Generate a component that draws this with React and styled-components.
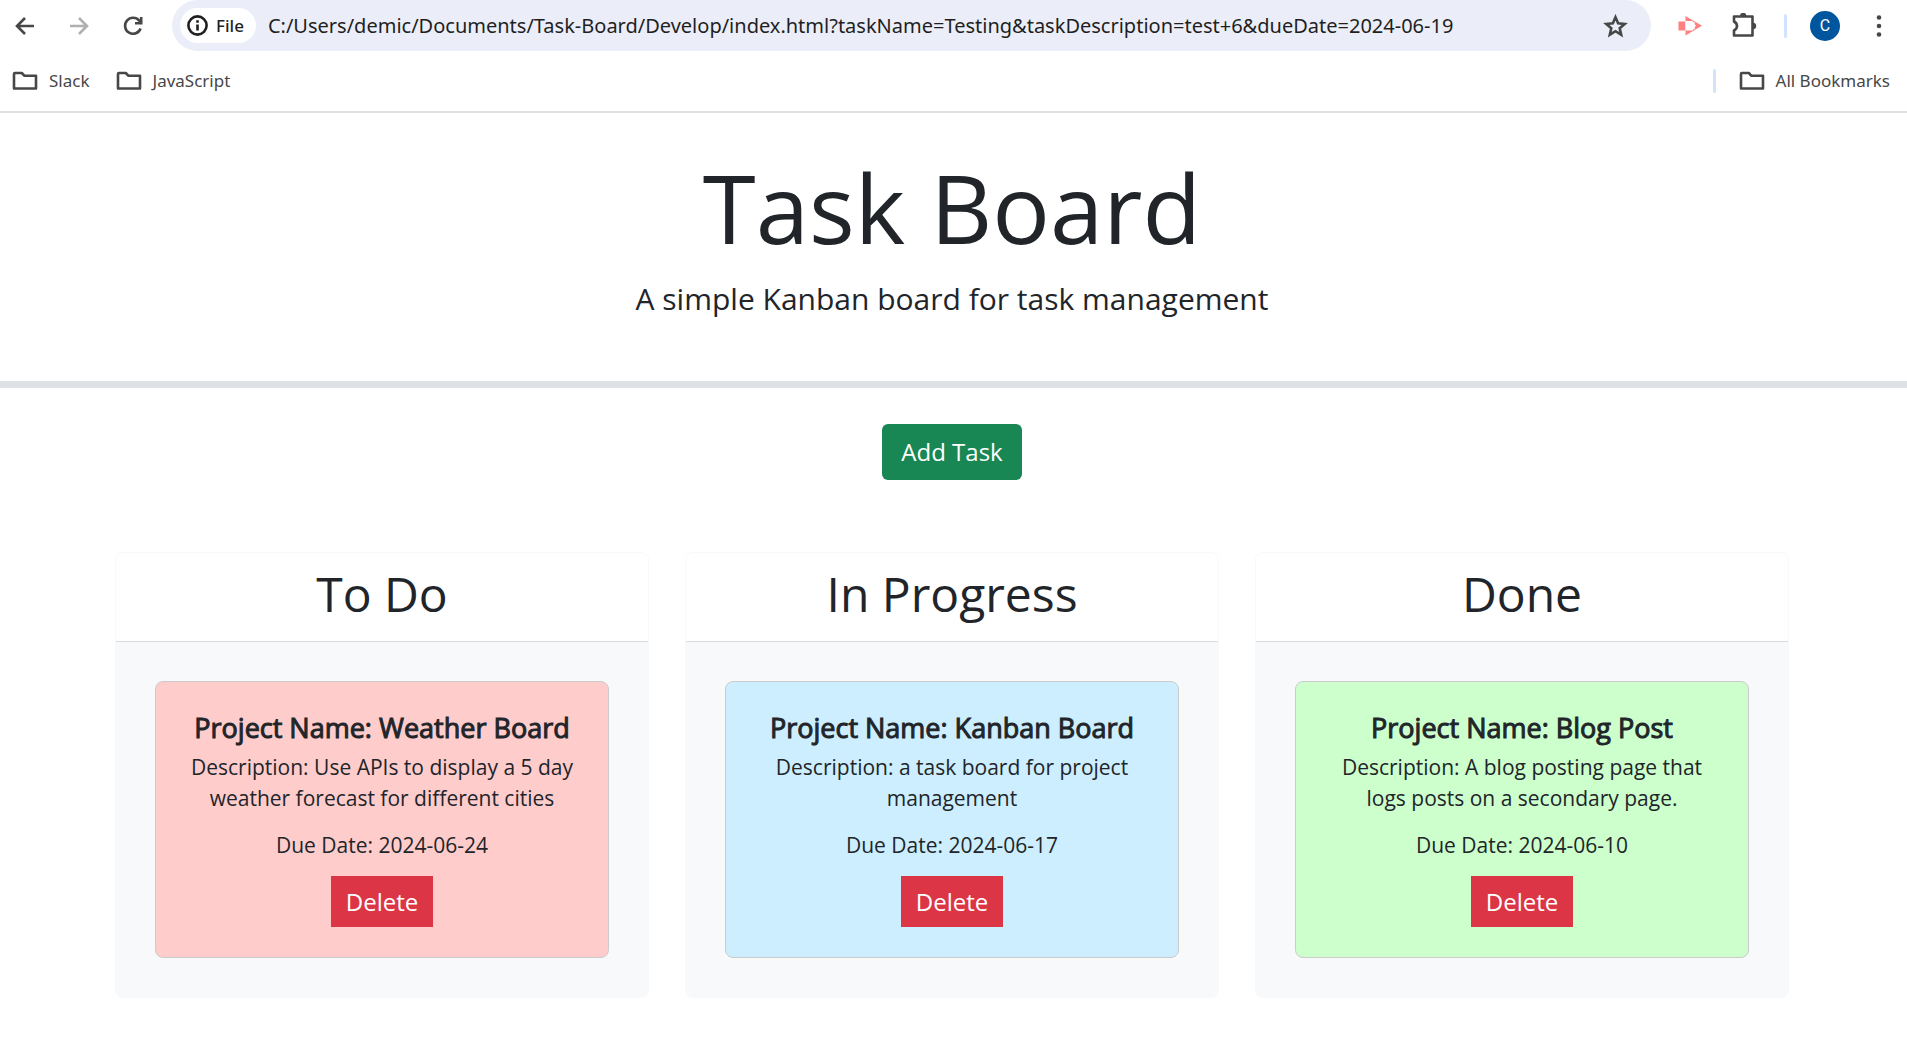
import React from "react";
import styled, { createGlobalStyle } from "styled-components";

const Global = createGlobalStyle`
  *, *::before, *::after { box-sizing: border-box; }
  body {
    margin: 0;
    background: #fff;
    color: #212529;
    font-family: "Open Sans", "Noto Sans", sans-serif;
    font-size: 20px;
    line-height: 30px;
  }
  h1, h2, h3, p { margin: 0; font-weight: 400; }
  button, input { font: inherit; }
`;

const Chrome = styled.div`
  border-bottom: 2px solid #dfdfe0;
  color: #474747;
`;

const Toolbar = styled.div`
  display: flex;
  align-items: center;
  height: 51px;
  padding: 0 14px;
`;

const IconButton = styled.button`
  display: grid;
  place-items: center;
  flex: none;
  width: 54px;
  height: 40px;
  padding: 0;
  border: 0;
  background: none;
  color: ${(p) => (p.$faded ? "#b0b0b0" : "#474747")};
  svg { display: block; }
`;

const NavGroup = styled.div`
  display: flex;
  margin: 0 12px 0 -16px;
`;

const AddressBar = styled.form`
  display: flex;
  align-items: center;
  flex: 1;
  height: 51px;
  padding: 0 9px 0 8px;
  border-radius: 26px;
  background: #ebeef8;
`;

const SchemeChip = styled.button`
  display: flex;
  align-items: center;
  gap: 8px;
  height: 35px;
  padding: 0 12px 0 7px;
  border: 0;
  border-radius: 18px;
  background: #fff;
  color: #1f1f1f;
  font-family: "Noto Sans", "Open Sans", sans-serif;
  font-size: 17px;
  font-weight: 500;
`;

const AddressInput = styled.input`
  flex: 1;
  min-width: 0;
  margin-left: 12px;
  padding: 0;
  border: 0;
  outline: 0;
  background: none;
  color: #1f1f1f;
  font-family: "Noto Sans", "Open Sans", sans-serif;
  font-size: 20px;
`;

const Divider = styled.span`
  width: 3px;
  height: 24px;
  border-radius: 2px;
  background: #d3e3fd;
`;

const Actions = styled.div`
  display: flex;
  align-items: center;
  margin: 0 -13px 0 12px;
`;

const ProfileGroup = styled.div`
  display: flex;
  align-items: center;
  gap: 23px;
  padding: 0 12px 0 13px;
`;

const Avatar = styled.button`
  width: 30px;
  height: 30px;
  padding: 0;
  border: 0;
  border-radius: 50%;
  background: #00569e;
  color: #fff;
  font-family: Roboto, sans-serif;
  font-size: 16px;
  line-height: 30px;
`;

const Bookmarks = styled.nav`
  display: flex;
  align-items: center;
  gap: 26px;
  height: 60px;
  padding: 0 17px 0 12px;
`;

const Bookmark = styled.a`
  display: flex;
  align-items: center;
  gap: 11px;
  color: #474747;
  font-family: "Noto Sans", "Open Sans", sans-serif;
  font-size: 17px;
  text-decoration: none;
`;

const AllBookmarks = styled.div`
  display: flex;
  align-items: center;
  gap: 23px;
  margin-left: auto;
`;

const Header = styled.header`
  padding: 36px 3px 63px 0;
  border-bottom: 7px solid #dee2e6;
  text-align: center;
`;

const Title = styled.h1`
  margin-bottom: 16px;
  font-size: 96px;
  line-height: 115px;
`;

const Lead = styled.p`
  font-size: 30px;
  line-height: 38px;
`;

const AddRow = styled.div`
  display: flex;
  justify-content: center;
  padding: 36px 3px 72px 0;
`;

const AddButton = styled.button`
  padding: 10px 19px;
  border: 0;
  border-radius: 6px;
  background: #198754;
  color: #fff;
  font-size: 24px;
  line-height: 36px;
`;

const Board = styled.main`
  display: grid;
  grid-template-columns: repeat(3, 1fr);
  gap: 36px;
  padding: 0 118px 56px 115px;
`;

const Lane = styled.section`
  overflow: hidden;
  border: 1px solid #f8f9fa;
  border-radius: 8px;
  background: #f8f9fb;
  text-align: center;
`;

const LaneTitle = styled.h2`
  padding: 12px 20px 18px;
  border-bottom: 1px solid #d9dbdd;
  background: #fff;
  font-size: 48px;
  line-height: 58px;
`;

const LaneBody = styled.div`
  padding: 39px;
`;

const Card = styled.article`
  padding: 30px;
  border: 1px solid #cbcbcc;
  border-radius: 8px;
  background: ${(p) => p.$tone};
`;

const CardTitle = styled.h3`
  margin-bottom: 8px;
  font-size: 27px;
  line-height: 32px;
  -webkit-text-stroke: 1px currentColor;
`;

const CardText = styled.p`
  margin-bottom: 16px;
  font-size: 21px;
  line-height: 31px;
`;

const DueDate = styled(CardText)`
  margin-bottom: 15px;
`;

const DeleteButton = styled.button`
  padding: 8px 15px;
  border: 0;
  background: #dc3545;
  color: #fff;
  font-size: 24px;
  line-height: 35px;
`;

const stroke = { fill: "none", stroke: "currentColor", strokeWidth: 2.6 };

const FolderIcon = () => (
  <svg width="26" height="20" viewBox="0 0 26 20" {...stroke} strokeLinejoin="round" aria-hidden="true">
    <path d="M2 3V17.500H24V4.800H12.500L9.800 2H3Q2 2 2 3Z" />
  </svg>
);

const tasks = [
  { lane: "To Do", tone: "#ffcccc", name: "Weather Board", text: "Use APIs to display a 5 day weather forecast for different cities", due: "2024-06-24" },
  { lane: "In Progress", tone: "#cceeff", name: "Kanban Board", text: "a task board for project management", due: "2024-06-17" },
  { lane: "Done", tone: "#ccffcc", name: "Blog Post", text: "A blog posting page that logs posts on a secondary page.", due: "2024-06-10" },
];

export default function App() {
  return (
    <>
      <Global />
      <Chrome>
        <Toolbar>
          <NavGroup>
            <IconButton aria-label="Back">
              <svg width="20" height="18" viewBox="0 0 20 18" {...stroke}><path d="M19 9H2M10 1L2 9L10 17" /></svg>
            </IconButton>
            <IconButton aria-label="Forward" $faded>
              <svg width="20" height="18" viewBox="0 0 20 18" {...stroke}><path d="M1 9H18M10 1L18 9L10 17" /></svg>
            </IconButton>
            <IconButton aria-label="Reload">
              <svg width="20" height="20" viewBox="0 0 20 20" {...stroke}><path d="M17.600 12.500A8 8 0 1 1 16.200 4.600L18 6.500M18.200 1V7.300H12" /></svg>
            </IconButton>
          </NavGroup>
          <AddressBar onSubmit={(e) => e.preventDefault()}>
            <SchemeChip type="button">
              <svg width="21" height="21" viewBox="0 0 21 21" {...stroke} aria-hidden="true">
                <circle cx="10.500" cy="10.500" r="9.100" />
                <path d="M10.500 9.500V15.500M10.500 5.300V7.700" />
              </svg>
              File
            </SchemeChip>
            <AddressInput
              aria-label="Address"
              defaultValue="C:/Users/demic/Documents/Task-Board/Develop/index.html?taskName=Testing&taskDescription=test+6&dueDate=2024-06-19"
            />
            <IconButton type="button" aria-label="Bookmark this page">
              <svg width="25" height="24" viewBox="0 0 25 24" {...stroke}>
                <path d="M12.500 3.200L15.100 9.300L21.700 9.900L16.700 14.200L18.200 20.700L12.500 17.200L6.800 20.700L8.300 14.200L3.300 9.900L9.900 9.300Z" />
              </svg>
            </IconButton>
          </AddressBar>
          <Actions>
            <IconButton aria-label="Screen recorder">
              <svg width="25" height="20" viewBox="0 0 25 20">
                <rect x="0.500" y="5.500" width="6.500" height="9" fill="#ff8080" />
                <path fill="#ff8080" d="M7.500 0L24 9.800L7.500 19.500Z" />
                <path fill="#fff" d="M7.500 5H14.500L15.500 6.500L17 6L16.500 8L18 9.800L16.500 11.500L17 13.500L15.500 13L14.500 14.500H7.500Z" />
              </svg>
            </IconButton>
            <IconButton aria-label="Extensions">
              <svg width="26" height="26" viewBox="0 0 26 26" {...stroke} strokeLinejoin="round">
                <path d="M3 3.500H21.500V22.500H3V17.500Q6 16 6 13T3 8.500Z" />
                <path fill="currentColor" stroke="none" d="M9 3A3.200 3.200 0 0 1 15.400 3ZM22 9.800A3.200 3.200 0 0 1 22 16.200Z" />
              </svg>
            </IconButton>
            <ProfileGroup>
              <Divider />
              <Avatar aria-label="Profile C">C</Avatar>
            </ProfileGroup>
            <IconButton aria-label="Menu">
              <svg width="6" height="22" viewBox="0 0 6 22" fill="currentColor">
                <circle cx="3" cy="2.500" r="2.300" /><circle cx="3" cy="11" r="2.300" /><circle cx="3" cy="19.500" r="2.300" />
              </svg>
            </IconButton>
          </Actions>
        </Toolbar>
        <Bookmarks aria-label="Bookmarks">
          <Bookmark href="#slack"><FolderIcon />Slack</Bookmark>
          <Bookmark href="#javascript"><FolderIcon />JavaScript</Bookmark>
          <AllBookmarks>
            <Divider />
            <Bookmark href="#all"><FolderIcon />All Bookmarks</Bookmark>
          </AllBookmarks>
        </Bookmarks>
      </Chrome>
      <Header>
        <Title>Task Board</Title>
        <Lead>A simple Kanban board for task management</Lead>
      </Header>
      <AddRow>
        <AddButton>Add Task</AddButton>
      </AddRow>
      <Board>
        {tasks.map((t) => (
          <Lane key={t.lane}>
            <LaneTitle>{t.lane}</LaneTitle>
            <LaneBody>
              <Card $tone={t.tone}>
                <CardTitle>{`Project Name: ${t.name}`}</CardTitle>
                <CardText>{`Description: ${t.text}`}</CardText>
                <DueDate>{`Due Date: ${t.due}`}</DueDate>
                <DeleteButton>Delete</DeleteButton>
              </Card>
            </LaneBody>
          </Lane>
        ))}
      </Board>
    </>
  );
}
